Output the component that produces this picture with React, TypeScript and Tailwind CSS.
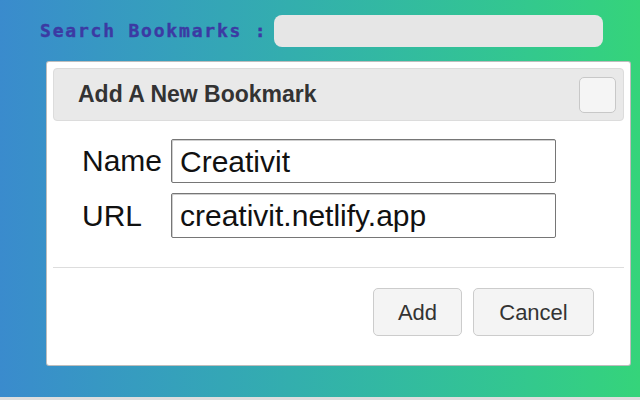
import React from "react";

export default function App() {
  return (
    <div className="w-[640px] h-[400px] flex flex-col overflow-hidden">
      <div className="h-[397px] w-full bg-linear-to-r from-[#3a8bcd] to-[#35d47a] flex flex-col">
        <div className="flex items-center pt-[15px]">
          <div
            className="ml-[40px] w-[234px] text-[18px] font-bold tracking-[1.8px] text-[#3c3aa3] leading-none [-webkit-text-stroke:0.4px_#3c3aa3]"
            style={{ fontFamily: '"DejaVu Sans Mono", monospace' }}
          >
            Search Bookmarks :
          </div>
          <div className="w-[329px] h-[32px] rounded-[8px] bg-[#e6e6e6]" />
        </div>

        <div
          className="mt-[15px] ml-[47px] w-[583px] h-[303px] bg-white p-[6px] shadow-[0_0_0_1px_#bdbdbd] rounded-[2px] flex flex-col"
          style={{ fontFamily: '"Liberation Sans", Arial, sans-serif' }}
        >
          <div className="h-[53px] w-full bg-[#e9e9e9] border border-[#dcdcdc] rounded-[4px] flex items-center justify-between pl-[24px] pr-[7px]">
            <div className="text-[23px] font-bold text-[#333]">Add A New Bookmark</div>
            <div className="w-[37px] h-[36px] bg-[#f5f5f5] border border-[#c8c8c8] rounded-[5px]" />
          </div>

          <div className="mt-[18px] pl-[29px] grid grid-cols-[89px_385px] gap-y-[10px] items-center">
            <div className="text-[30px] text-[#111] leading-none">Name</div>
            <div className="h-[44px] border border-[#767676] rounded-[2px] shadow-[inset_1px_1px_0_#cfcfcf] flex items-center pl-[8px] text-[30px] text-[#111]">
              Creativit
            </div>
            <div className="text-[30px] text-[#111] leading-none">URL</div>
            <div className="h-[45px] border border-[#767676] rounded-[2px] shadow-[inset_1px_1px_0_#cfcfcf] flex items-center pl-[8px] text-[30px] text-[#111]">
              creativit.netlify.app
            </div>
          </div>

          <div className="mt-[29px] h-px w-full bg-[#dddddd]" />

          <div className="mt-[20px] flex justify-end gap-[11px] pr-[30px]">
            <div className="w-[89px] h-[48px] bg-[#f4f4f4] border border-[#cccccc] rounded-[5px] flex items-center justify-center text-[22px] text-[#333]">
              Add
            </div>
            <div className="w-[121px] h-[48px] bg-[#f4f4f4] border border-[#cccccc] rounded-[5px] flex items-center justify-center text-[22px] text-[#333]">
              Cancel
            </div>
          </div>
        </div>
      </div>
      <div className="h-[3px] w-full bg-[#dedede]" />
    </div>
  );
}
